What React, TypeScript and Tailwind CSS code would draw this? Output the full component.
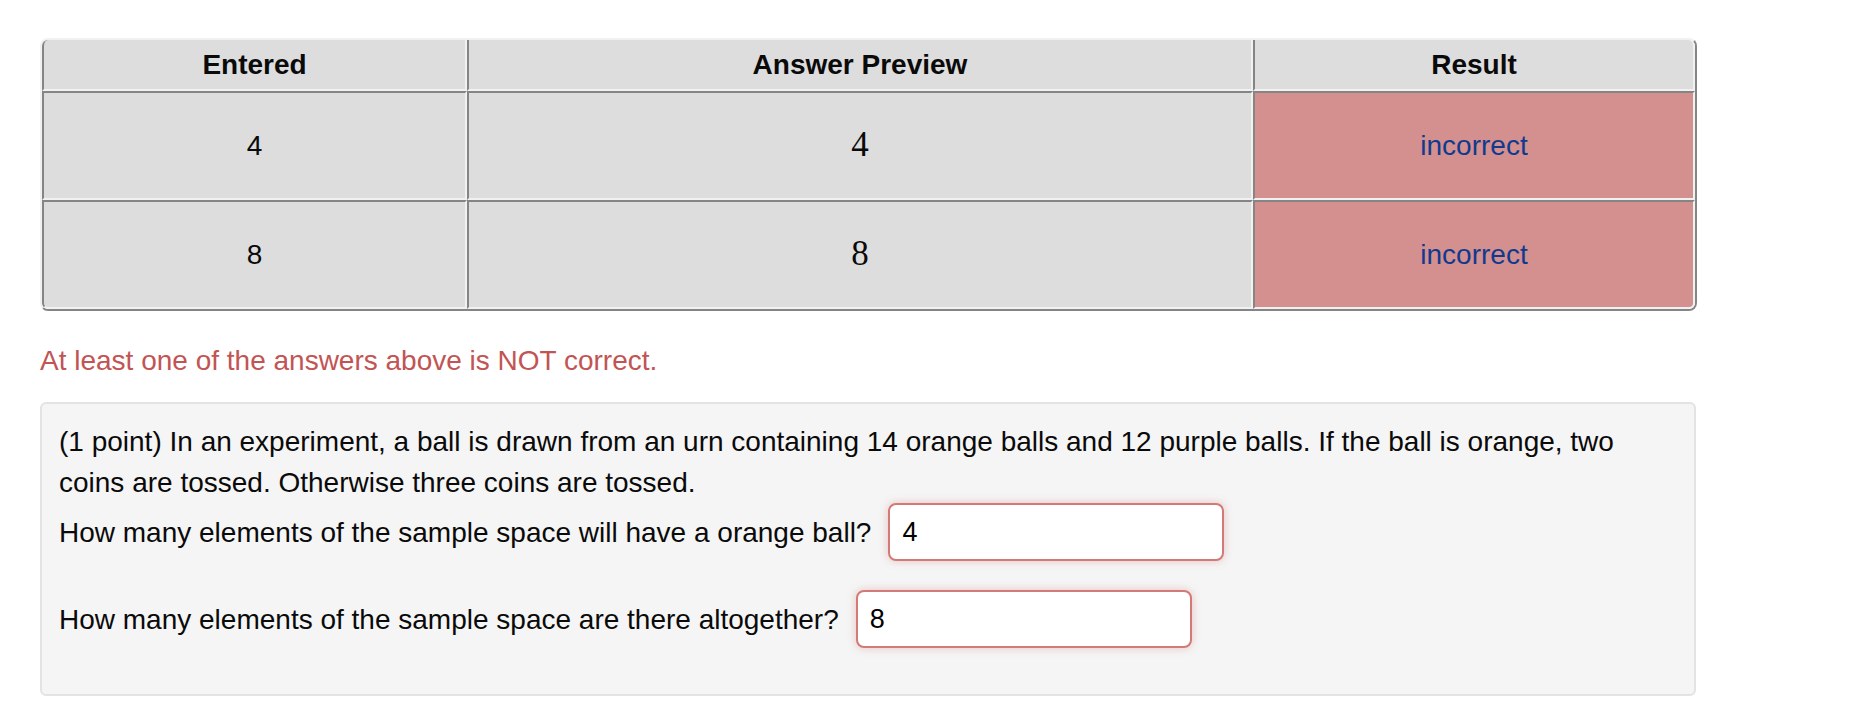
import React from 'react'

const rows = [
  { entered: '4', preview: '4', result: 'incorrect' },
  { entered: '8', preview: '8', result: 'incorrect' },
]

// inset look for cells: dark top/left, light bottom/right
const cellBase =
  'border-2 border-t-[#858585] border-l-[#858585] border-b-[#f1f1f1] border-r-[#f1f1f1] text-center align-middle'

export default function App() {
  return (
    <div className="min-h-screen bg-white pl-[40px] pt-[38px] font-['Liberation_Sans',Arial,sans-serif] text-[#0a0a0a]">
      <div className="w-[1657px]">
        {/* Attempt results */}
        <table className="w-[1657px] table-fixed border-separate border-spacing-0 rounded-[8px] border-2 border-t-[#f1f1f1] border-l-[#f1f1f1] border-b-[#858585] border-r-[#858585]">
          <thead>
            <tr>
              <th className="h-[51px] w-[425px] rounded-tl-[6px] border-2 border-t-0 border-l-[#858585] border-b-[#f1f1f1] border-r-[#f1f1f1] bg-[#dddddd] text-[28px] font-bold">
                Entered
              </th>
              <th className="h-[51px] w-[786px] border-2 border-t-0 border-l-[#858585] border-b-[#f1f1f1] border-r-[#f1f1f1] bg-[#dddddd] text-[28px] font-bold">
                Answer Preview
              </th>
              <th className="h-[51px] w-[442px] rounded-tr-[6px] border-2 border-t-0 border-l-[#858585] border-b-[#f1f1f1] border-r-[#f1f1f1] bg-[#dddddd] text-[28px] font-bold">
                Result
              </th>
            </tr>
          </thead>
          <tbody>
            {rows.map((r, i) => (
              <tr key={i}>
                <td className={`${cellBase} h-[109px] bg-[#dddddd] text-[28px] ${i === rows.length - 1 ? 'rounded-bl-[6px]' : ''}`}>
                  {r.entered}
                </td>
                <td className={`${cellBase} h-[109px] bg-[#dddddd] font-['Liberation_Serif','Times_New_Roman',serif] text-[35px]`}>
                  {r.preview}
                </td>
                <td className={`${cellBase} h-[109px] bg-[#d48f8f] text-[28px] text-[#0f3a8e] ${i === rows.length - 1 ? 'rounded-br-[6px]' : ''}`}>
                  {r.result}
                </td>
              </tr>
            ))}
          </tbody>
        </table>

        <p className="mt-[30px] text-[28px] leading-[40px] text-[#c25454]">
          At least one of the answers above is NOT correct.
        </p>

        {/* Problem well */}
        <div className="mt-[21px] w-[1656px] rounded-[6px] border-2 border-[#e3e3e3] bg-[#f5f5f5] pb-[46px] pl-[17px] pr-[19px] pt-[17px] text-[28px] leading-[41px]">
          <p>
            (1 point) In an experiment, a ball is drawn from an urn containing 14 orange balls and 12 purple balls. If the
            ball is orange, two coins are tossed. Otherwise three coins are tossed.
          </p>
          <div className="flex h-[58px] items-center">
            <span>How many elements of the sample space will have a orange ball?</span>
            <input
              readOnly
              value="4"
              className="ml-[17px] h-[58px] w-[336px] rounded-[8px] border-2 border-[#d27a78] bg-white px-[12px] text-[27px] text-black shadow-[0_0_8px_rgba(210,100,100,0.35)] outline-none"
            />
          </div>
          <div className="mt-[29px] flex h-[58px] items-center">
            <span>How many elements of the sample space are there altogether?</span>
            <input
              readOnly
              value="8"
              className="ml-[17px] h-[58px] w-[336px] rounded-[8px] border-2 border-[#d27a78] bg-white px-[12px] text-[27px] text-black shadow-[0_0_8px_rgba(210,100,100,0.35)] outline-none"
            />
          </div>
        </div>
      </div>
    </div>
  )
}
